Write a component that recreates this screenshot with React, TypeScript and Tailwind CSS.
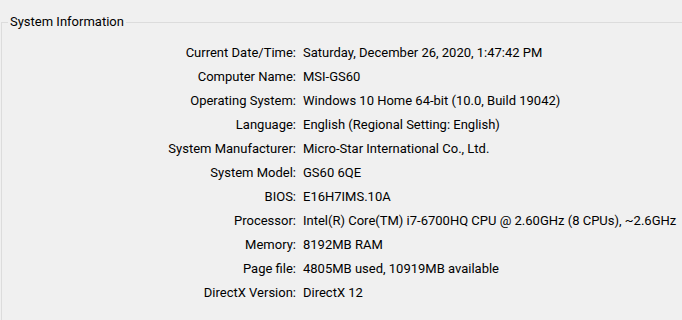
const rows: [string, string][] = [
  ["Current Date/Time:", "Saturday, December 26, 2020, 1:47:42 PM"],
  ["Computer Name:", "MSI-GS60"],
  ["Operating System:", "Windows 10 Home 64-bit (10.0, Build 19042)"],
  ["Language:", "English (Regional Setting: English)"],
  ["System Manufacturer:", "Micro-Star International Co., Ltd."],
  ["System Model:", "GS60 6QE"],
  ["BIOS:", "E16H7IMS.10A"],
  ["Processor:", "Intel(R) Core(TM) i7-6700HQ CPU @ 2.60GHz (8 CPUs), ~2.6GHz"],
  ["Memory:", "8192MB RAM"],
  ["Page file:", "4805MB used, 10919MB available"],
  ["DirectX Version:", "DirectX 12"],
];

export default function App() {
  return (
    <div className="w-[682px] h-[320px] overflow-hidden bg-[#f0f0f0] pt-[14px] pl-[1px] text-[13px] text-black font-['Roboto',sans-serif]">
      <fieldset className="w-[720px] h-[400px] border border-[#dcdcdc] pl-[6px] m-0">
        <legend className="px-[2px] leading-[16px]">System Information</legend>
        <div className="grid grid-cols-[288px_auto] gap-x-[7px] mt-[11px]">
          {rows.map(([label, value]) => (
            <div key={label} className="contents">
              <div className="text-right h-[24px] leading-[24px]">{label}</div>
              <div className="h-[24px] leading-[24px] whitespace-nowrap">{value}</div>
            </div>
          ))}
        </div>
      </fieldset>
    </div>
  );
}
